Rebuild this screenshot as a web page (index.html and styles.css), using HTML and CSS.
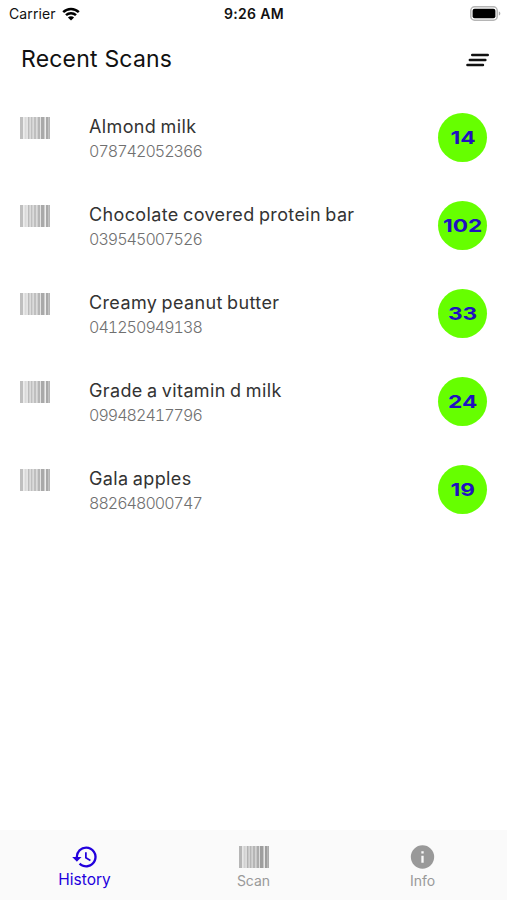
FILE: index.html
```
<!DOCTYPE html>
<html lang="en">
<head>
    <meta charset="UTF-8">
    <meta name="viewport" content="width=device-width, initial-scale=1.0">
    <title>Recent Scans</title>
    <link rel="stylesheet" href="styles.css">
</head>
<body>
    <!-- Shared barcode icon -->
    <svg class="defs" width="0" height="0">
        <symbol id="barcode" viewBox="0 0 30 22">
            <rect x="0" width="3" height="22" opacity=".7"/>
            <rect x="3" width="1.5" height="22" opacity=".2"/>
            <rect x="4.5" width="2" height="22" opacity=".42"/>
            <rect x="6.5" width="1.5" height="22" opacity=".3"/>
            <rect x="8" width="1.5" height="22" opacity=".75"/>
            <rect x="9.5" width="1.5" height="22" opacity=".4"/>
            <rect x="11" width="1.5" height="22" opacity=".7"/>
            <rect x="12.5" width="1.5" height="22" opacity=".4"/>
            <rect x="14" width="2" height="22" opacity=".7"/>
            <rect x="16" width="1.5" height="22" opacity=".4"/>
            <rect x="17.5" width="2.5" height="22" opacity=".8"/>
            <rect x="20" width="1" height="22" opacity=".3"/>
            <rect x="21" width="3.5" height="22" opacity=".95"/>
            <rect x="24.5" width="1.5" height="22" opacity=".2"/>
            <rect x="26" width="2.5" height="22" opacity=".95"/>
            <rect x="28.5" width="1.5" height="22" opacity=".8"/>
        </symbol>
    </svg>

    <div class="status-bar">
        <div class="carrier">
            <span>Carrier</span>
            <svg width="18" height="14" viewBox="0 0 18 14">
                <path d="M1.2 5.2a11.2 11.2 0 0 1 15.6 0M4 8.2a7.2 7.2 0 0 1 10 0" fill="none" stroke="#000" stroke-width="2.5"/>
                <path d="M9 13.6 5.9 10.5a4.4 4.4 0 0 1 6.2 0z"/>
            </svg>
        </div>
        <div class="time">9:26 AM</div>
        <div class="battery">
            <svg width="31" height="15" viewBox="0 0 31 15">
                <rect x=".8" y=".8" width="26.4" height="13.4" rx="3.8" fill="#fff" stroke="#b5b5b5" stroke-width="1.5"/>
                <rect x="2.6" y="2.7" width="22.8" height="9.6" rx="2"/>
                <path d="M28.8 5.5c2 .6 2 3.4 0 4z" fill="#aaa"/>
            </svg>
        </div>
    </div>

    <div class="header">
        <h1>Recent Scans</h1>
        <svg width="24" height="16" viewBox="0 0 24 16">
            <path d="M6.2 3h15.6M3.8 8h15.6M1.4 13H17" fill="none" stroke="#111" stroke-width="2.4" stroke-linecap="round"/>
        </svg>
    </div>

    <div class="list">
        <div class="item">
            <svg class="barcode"><use href="#barcode"/></svg>
            <div class="details">
                <div class="name">Almond milk</div>
                <div class="code">078742052366</div>
            </div>
            <div class="score"><span>14</span></div>
        </div>
        <div class="item">
            <svg class="barcode"><use href="#barcode"/></svg>
            <div class="details">
                <div class="name">Chocolate covered protein bar</div>
                <div class="code">039545007526</div>
            </div>
            <div class="score"><span>102</span></div>
        </div>
        <div class="item">
            <svg class="barcode"><use href="#barcode"/></svg>
            <div class="details">
                <div class="name">Creamy peanut butter</div>
                <div class="code">041250949138</div>
            </div>
            <div class="score"><span>33</span></div>
        </div>
        <div class="item">
            <svg class="barcode"><use href="#barcode"/></svg>
            <div class="details">
                <div class="name">Grade a vitamin d milk</div>
                <div class="code">099482417796</div>
            </div>
            <div class="score"><span>24</span></div>
        </div>
        <div class="item">
            <svg class="barcode"><use href="#barcode"/></svg>
            <div class="details">
                <div class="name">Gala apples</div>
                <div class="code">882648000747</div>
            </div>
            <div class="score"><span>19</span></div>
        </div>
    </div>

    <div class="tabs">
        <div class="tab active">
            <svg width="28" height="28" viewBox="0 0 24 24">
                <path d="M13 3a9 9 0 0 0-9 9H1l3.9 3.9.07.14L9 12H6a7 7 0 1 1 2.06 4.94l-1.42 1.42A9 9 0 1 0 13 3zm-1 5v5l4.28 2.54.72-1.21-3.5-2.08V8z"/>
            </svg>
            <span>History</span>
        </div>
        <div class="tab">
            <svg class="barcode"><use href="#barcode"/></svg>
            <span>Scan</span>
        </div>
        <div class="tab">
            <svg width="29" height="29" viewBox="0 0 24 24">
                <path d="M12 2a10 10 0 1 0 0 20 10 10 0 0 0 0-20zm1 15h-2v-6h2v6zm0-8h-2V7h2v2z"/>
            </svg>
            <span>Info</span>
        </div>
    </div>
</body>
</html>
```

FILE: styles.css
```
body {
    font-family: Inter, "Liberation Sans", sans-serif;
    background-color: #fff;
    display: flex;
    flex-direction: column;
    height: 100vh;
    margin: 0;
    overflow: hidden;
}

.defs {
    display: none;
}

.status-bar {
    display: flex;
    height: 27px;
    align-items: center;
    font-size: 14px;
    color: #111;
}

.carrier, .battery {
    flex: 1;
    display: flex;
    align-items: center;
}

.carrier {
    padding-left: 9px;
    gap: 6px;
    letter-spacing: 0.1px;
}

.time {
    font-weight: 600;
    letter-spacing: 0.35px;
    margin-right: 2px;
}

.battery {
    justify-content: flex-end;
    padding-right: 6px;
}

.header {
    display: flex;
    justify-content: space-between;
    align-items: center;
    height: 64px;
    padding: 0 17px 0 21px;
}

.header svg {
    margin-top: 2px;
}

h1 {
    font-size: 23px;
    font-weight: 400;
    letter-spacing: 0.2px;
    margin: 0;
    color: #111;
}

.list {
    flex: 1;
    padding-top: 3px;
}

.item {
    display: flex;
    align-items: center;
    height: 88px;
    padding: 0 20px;
}

.barcode {
    width: 30px;
    height: 22px;
    fill: #999;
}

.item .barcode {
    margin: 0 39px 20px 0;
    fill: #a4a4a4;
}

.details {
    flex: 1;
    padding-top: 2px;
}

.name {
    font-size: 18px;
    line-height: 25px;
    letter-spacing: 0.37px;
    word-spacing: -1.1px;
    color: #333;
}

.code {
    font-size: 16px;
    line-height: 25px;
    letter-spacing: -0.95px;
    font-weight: 300;
    font-variant-numeric: tabular-nums;
    color: #707070;
}

.score {
    display: flex;
    justify-content: center;
    align-items: center;
    width: 49px;
    height: 49px;
    margin-bottom: 1px;
    border-radius: 50%;
    background-color: #6f0;
    color: #2010c0;
    font-size: 18px;
    font-weight: 700;
}

.score span {
    transform: scaleX(1.26);
}

.tabs {
    display: flex;
    height: 70px;
    background-color: #fafafa;
}

.tab {
    flex: 1;
    display: flex;
    flex-direction: column;
    align-items: center;
    color: #999;
    fill: #999;
    font-size: 14px;
}

.tab svg {
    height: 28px;
    margin-top: 13px;
}

.tab .barcode {
    height: 22px;
    margin: 16px 0 3px;
}

.tab span {
    line-height: 20px;
}

.tab.active {
    color: #20d;
    fill: #20d;
    font-size: 15.5px;
}

.active span {
    line-height: 18px;
}
```
